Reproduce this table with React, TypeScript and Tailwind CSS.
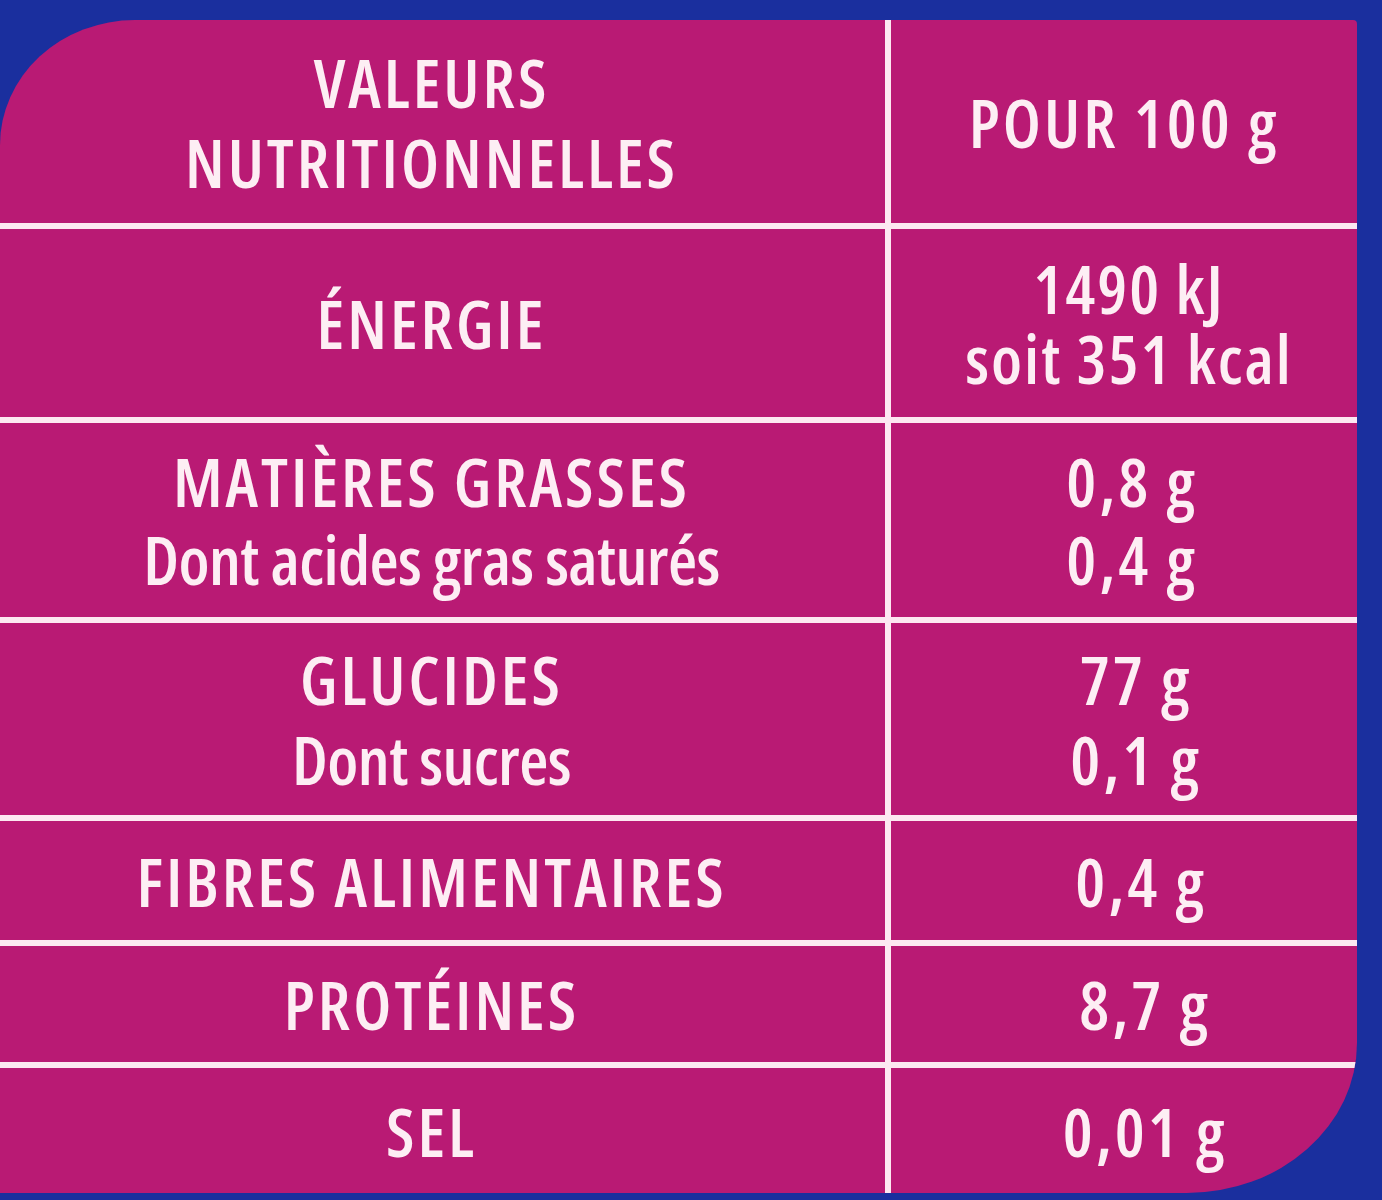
type Line = { t: string; cls: string };

const caps = "tracking-[3px]";
const lower = "tracking-[-0.6px]";

// right-column padding drifts a little per row, as on the printed label
const rows: { h: string; lead: string; pad: string; left: Line[]; right: Line[] }[] = [
  {
    h: "h-[203px]",
    lead: "leading-[80px]",
    pad: "pl-[0px]",
    left: [
      { t: "VALEURS", cls: caps },
      { t: "NUTRITIONNELLES", cls: caps },
    ],
    right: [{ t: "POUR 100 g", cls: caps }],
  },
  {
    h: "h-[188px]",
    lead: "leading-[70px]",
    pad: "pl-[10px]",
    left: [{ t: "ÉNERGIE", cls: caps }],
    right: [
      { t: "1490 kJ", cls: "tracking-[2px]" },
      { t: "soit 351 kcal", cls: "tracking-[2px]" },
    ],
  },
  {
    h: "h-[194px]",
    lead: "leading-[78px]",
    pad: "pl-[16px]",
    left: [
      { t: "MATIÈRES GRASSES", cls: caps },
      { t: "Dont acides gras saturés", cls: lower },
    ],
    right: [
      { t: "0,8 g", cls: caps },
      { t: "0,4 g", cls: caps },
    ],
  },
  {
    h: "h-[192px]",
    lead: "leading-[80px]",
    pad: "pl-[24px]",
    left: [
      { t: "GLUCIDES", cls: caps },
      { t: "Dont sucres", cls: lower },
    ],
    right: [
      { t: "77 g", cls: caps },
      { t: "0,1 g", cls: caps },
    ],
  },
  {
    h: "h-[119px]",
    lead: "leading-[78px]",
    pad: "pl-[34px]",
    left: [{ t: "FIBRES ALIMENTAIRES", cls: caps }],
    right: [{ t: "0,4 g", cls: caps }],
  },
  {
    h: "h-[116px]",
    lead: "leading-[78px]",
    pad: "pl-[42px]",
    left: [{ t: "PROTÉINES", cls: caps }],
    right: [{ t: "8,7 g", cls: caps }],
  },
  {
    h: "h-[125px]",
    lead: "leading-[78px]",
    pad: "pl-[42px]",
    left: [{ t: "SEL", cls: caps }],
    right: [{ t: "0,01 g", cls: caps }],
  },
];

const App = () => {
  return (
    <div className="w-[1382px] h-[1200px] bg-[#1a2f9e] overflow-hidden pt-[20px]">
      {/* Pink nutrition panel */}
      <div
        className="w-[1357px] h-[1173px] bg-[#b91a74] rounded-tl-[135px_125px] rounded-tr-[4px] rounded-br-[170px_150px] overflow-hidden flex flex-col text-[#fdeef4] text-[67px] font-[560] font-stretch-condensed"
        style={{ fontFamily: '"Open Sans", "DejaVu Sans Condensed", sans-serif' }}
      >
        {rows.map((row, i) => (
          <div
            key={i}
            className={`${row.h} shrink-0 flex ${i < rows.length - 1 ? "border-b-[6px] border-[#fde8f1] box-content" : ""}`}
          >
            <div className={`w-[891px] shrink-0 border-r-[6px] border-[#fde8f1] flex flex-col items-center justify-center pr-[22px] ${row.lead}`}>
              {row.left.map((l) => (
                <div key={l.t} className={`whitespace-nowrap ${l.cls}`}>{l.t}</div>
              ))}
            </div>
            <div className={`flex-1 flex flex-col items-center justify-center ${row.pad} ${row.lead}`}>
              {row.right.map((l) => (
                <div key={l.t} className={`whitespace-nowrap ${l.cls}`}>{l.t}</div>
              ))}
            </div>
          </div>
        ))}
      </div>
    </div>
  );
};

export default App;
